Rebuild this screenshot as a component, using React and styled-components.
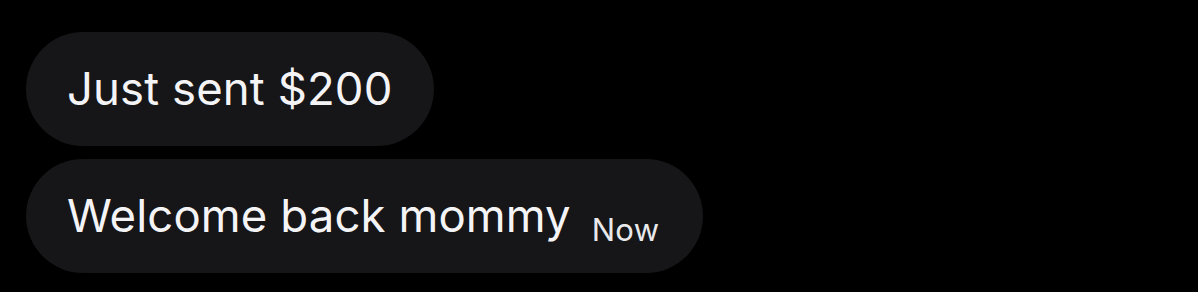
import React from "react";
import styled, { createGlobalStyle } from "styled-components";

const GlobalStyle = createGlobalStyle`
  html, body {
    margin: 0;
    padding: 0;
    background: #000;
  }
  body {
    font-family: Inter, "Liberation Sans", sans-serif;
    -webkit-font-smoothing: antialiased;
  }
`;

const Thread = styled.div`
  width: 1198px;
  height: 292px;
  box-sizing: border-box;
  padding: 32px 0 0 26px;
  display: flex;
  flex-direction: column;
  align-items: flex-start;
  gap: 13px;
  background: #000;
`;

const Bubble = styled.div`
  height: 114px;
  box-sizing: border-box;
  padding: 0 ${(p) => (p.$stamped ? 44 : 42)}px 0 41px;
  border-radius: 57px;
  background: #161618;
  display: flex;
  align-items: baseline;
  line-height: 114px;
  white-space: nowrap;
`;

const Text = styled.span`
  color: #f4f4f6;
  font-size: 45.5px;
  font-weight: 400;
  letter-spacing: 0.1px;
`;

const Time = styled.span`
  color: #e9e9ec;
  font-size: 31px;
  margin-left: 21px;
  position: relative;
  top: 9px;
  letter-spacing: 0.3px;
`;

export default function App() {
  return (
    <>
      <GlobalStyle />
      <Thread>
        <Bubble>
          <Text>Just sent $200</Text>
        </Bubble>
        <Bubble $stamped>
          <Text>Welcome back mommy</Text>
          <Time>Now</Time>
        </Bubble>
      </Thread>
    </>
  );
}
